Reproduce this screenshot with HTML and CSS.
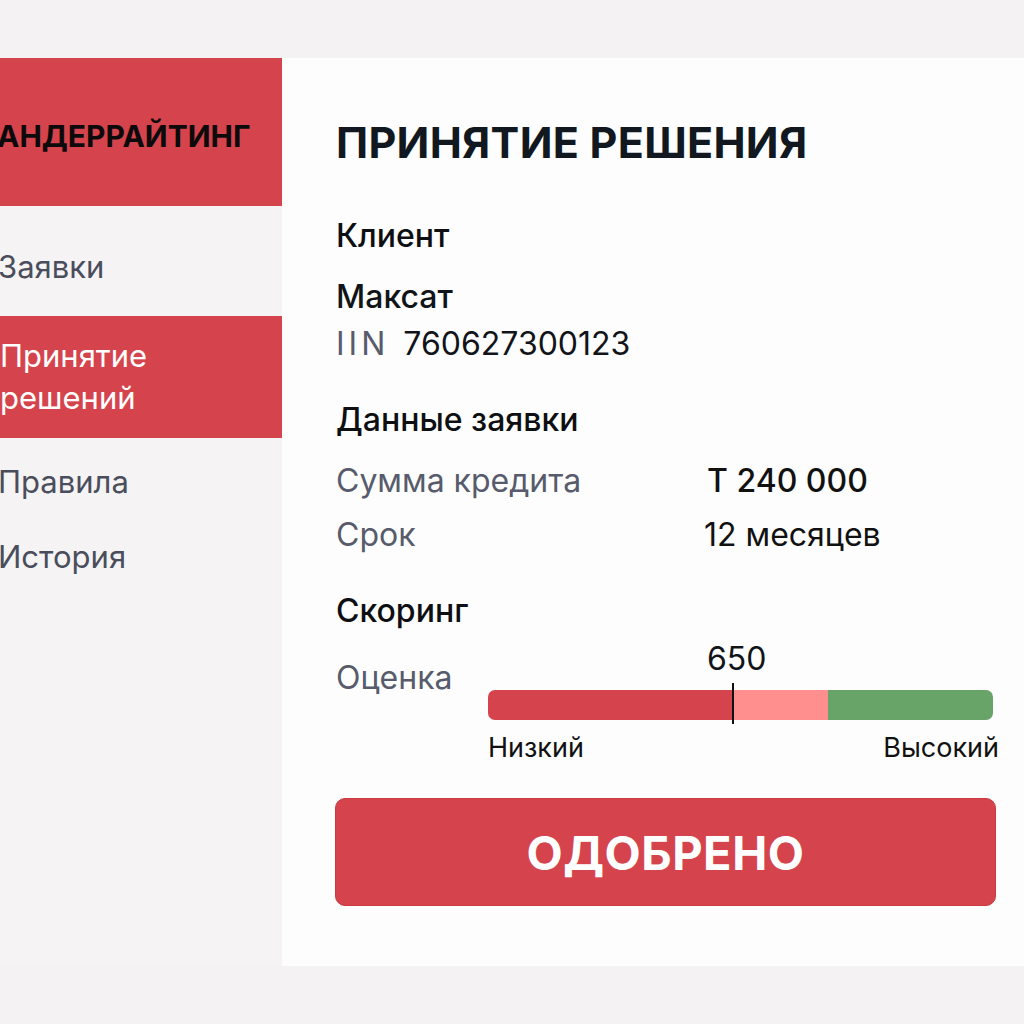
FILE: index.html
```html
<!DOCTYPE html>
<html lang="ru">
<head>
    <meta charset="UTF-8">
    <meta name="viewport" content="width=device-width, initial-scale=1.0">
    <title>Андеррайтинг - Принятие решения</title>
    <link rel="stylesheet" href="styles.css">
</head>
<body>
    <div class="app">
        <aside class="sidebar">
            <div class="brand">АНДЕРРАЙТИНГ</div>
            <nav class="nav">
                <a class="nav-item first" href="#">Заявки</a>
                <a class="nav-item active" href="#">Принятие<br>решений</a>
                <a class="nav-item" href="#">Правила</a>
                <a class="nav-item" href="#">История</a>
            </nav>
        </aside>

        <main class="main">
            <h1 class="page-title">ПРИНЯТИЕ РЕШЕНИЯ</h1>

            <h2 class="section-title client-title">Клиент</h2>
            <div class="client-name">Максат</div>
            <div class="client-iin"><span class="muted iin-label">IIN</span>760627300123</div>

            <h2 class="section-title">Данные заявки</h2>
            <div class="data-row">
                <span class="muted">Сумма кредита</span>
                <span class="value amount">Т 240 000</span>
            </div>
            <div class="data-row term">
                <span class="muted">Срок</span>
                <span class="value term-value">12 месяцев</span>
            </div>

            <h2 class="section-title">Скоринг</h2>
            <div class="score-row">
                <div class="muted score-label">Оценка</div>
                <div class="score-box">
                    <div class="score-value">650</div>
                    <div class="score-bar">
                        <div class="seg seg-low"></div>
                        <div class="seg seg-mid"></div>
                        <div class="seg seg-high"></div>
                        <div class="marker"></div>
                    </div>
                    <div class="score-legend">
                        <span>Низкий</span>
                        <span>Высокий</span>
                    </div>
                </div>
            </div>

            <button class="decision-button" type="button">ОДОБРЕНО</button>
        </main>
    </div>
</body>
</html>
```

FILE: styles.css
```css
/* Underwriting decision screen */
body {
    font-family: 'Inter', 'Noto Sans', sans-serif;
    margin: 0;
    padding: 0;
    background: #f4f2f3;
    color: #111418;
}

.app {
    display: flex;
    margin-top: 58px;
    height: 908px;
}

.sidebar {
    width: 282px;
    flex-shrink: 0;
    background: #f5f3f4;
}

.brand {
    height: 148px;
    background: #d5444c;
    display: flex;
    align-items: center;
    margin-left: -3px;
    padding-top: 8px;
    box-sizing: border-box;
    font-size: 30px;
    font-weight: 700;
    color: #0d0a0b;
}

.nav {
    display: flex;
    flex-direction: column;
}
.nav-item {
    display: block;
    font-size: 31px;
    line-height: 34px;
    color: #4a4e5c;
    text-decoration: none;
    padding: 27px 0 14px;
    margin-left: -2px;
}
.nav-item.first {
    padding: 44px 0 32px;
}
.nav-item.active {
    background: #d5444c;
    color: #fff;
    line-height: 42px;
    padding: 19px 0;
    margin-left: 0;
}

.main {
    flex: 1;
    background: #fdfdfd;
    padding: 0 28px 0 54px;
}

.page-title {
    margin: 0;
    padding-top: 60px;
    font-size: 43px;
    line-height: 48px;
    font-weight: 700;
    color: #111820;
    letter-spacing: 0.3px;
}

.section-title {
    margin: 36px 0 0;
    font-size: 32px;
    line-height: 40px;
    font-weight: 500;
    color: #0e0f12;
}
.section-title.client-title {
    margin-top: 50px;
}

.client-name {
    margin-top: 21px;
    font-size: 32px;
    line-height: 40px;
    font-weight: 500;
}
.client-iin {
    margin-top: 7px;
    font-size: 32px;
    line-height: 40px;
}
.iin-label {
    margin-right: 14px;
    letter-spacing: 4px;
}

.muted {
    color: #575b6b;
}

.data-row {
    display: grid;
    grid-template-columns: 371px 1fr;
    margin-top: 21px;
    font-size: 32px;
    line-height: 40px;
}
.data-row.term {
    margin-top: 14px;
}
.data-row .value {
    color: #111;
}
.data-row .amount {
    font-weight: 500;
}
.data-row .term-value {
    margin-left: -3px;
}

.score-row {
    display: grid;
    grid-template-columns: 152px 1fr;
    margin-top: 12px;
}
.score-label {
    font-size: 32px;
    line-height: 32px;
    padding-top: 19px;
}
.score-value {
    font-size: 32px;
    line-height: 32px;
    padding-left: 219px;
}
.score-bar {
    position: relative;
    display: flex;
    height: 30px;
    margin-top: 15px;
    margin-right: 3px;
}
.seg {
    height: 100%;
}
.seg-low {
    width: 245px;
    background: #d5444c;
    border-radius: 7px 0 0 7px;
}
.seg-mid {
    width: 95px;
    background: #ff8f8f;
}
.seg-high {
    flex: 1;
    background: #68a468;
    border-radius: 0 7px 7px 0;
}
.marker {
    position: absolute;
    left: 244px;
    top: -7px;
    width: 2px;
    height: 41px;
    background: #111;
}
.score-legend {
    display: flex;
    justify-content: space-between;
    margin-top: 13px;
    margin-right: -3px;
    font-size: 27px;
    line-height: 30px;
    color: #111;
}

.decision-button {
    display: block;
    width: 661px;
    height: 108px;
    margin-top: 35px;
    margin-left: -1px;
    background: #d5444c;
    border: 1px solid #c93a42;
    border-radius: 10px;
    color: #fff;
    font-family: 'Inter', 'Noto Sans', sans-serif;
    font-size: 47px;
    font-weight: 700;
    letter-spacing: 0.5px;
    cursor: pointer;
}
```
